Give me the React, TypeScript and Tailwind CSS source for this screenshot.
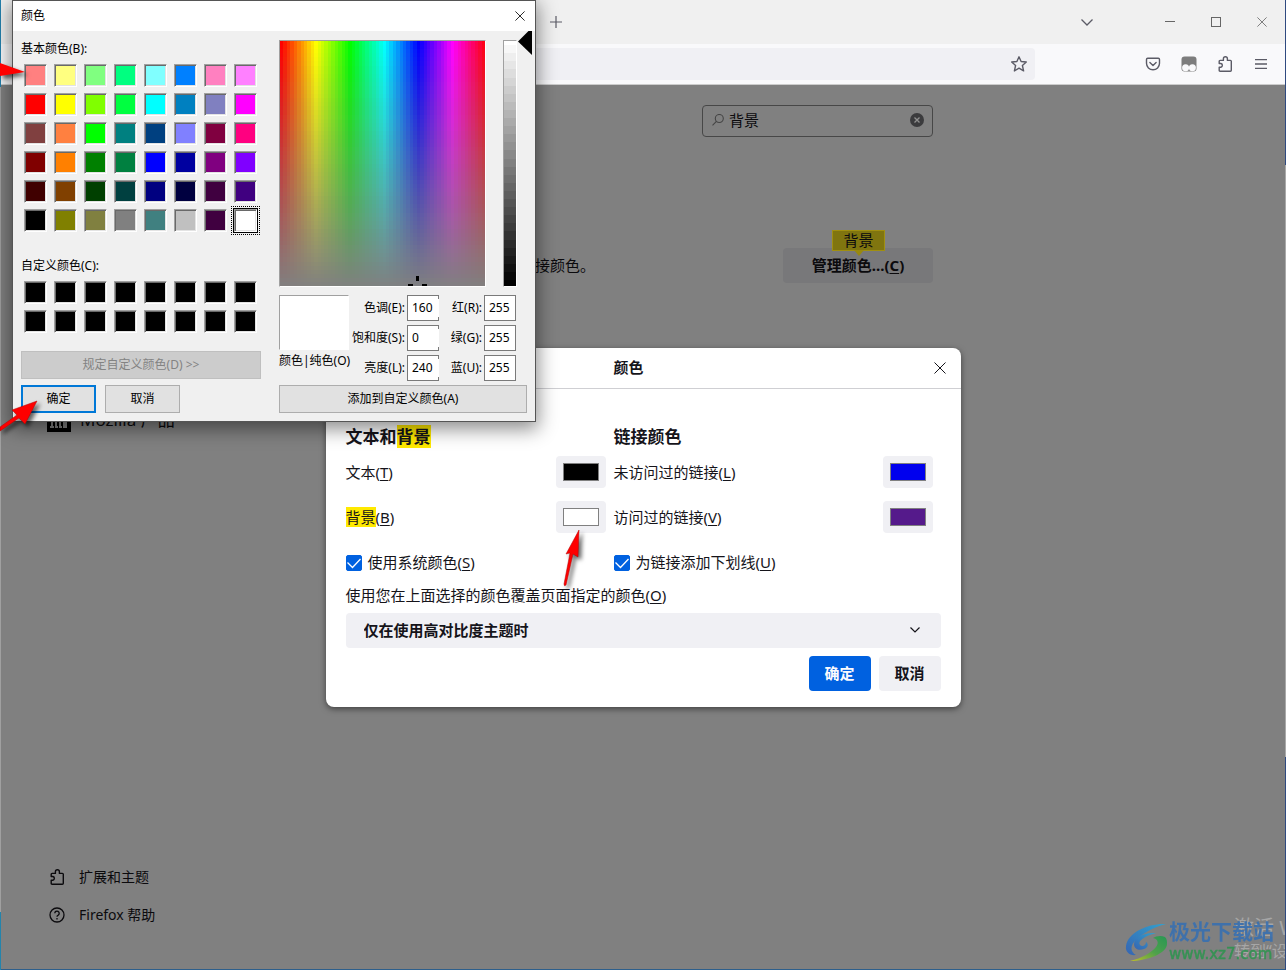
import type { ReactNode } from 'react';

const BASIC_COLORS = [
  '#ff8080', '#ffff80', '#80ff80', '#00ff80', '#80ffff', '#0080ff', '#ff80c0', '#ff80ff',
  '#ff0000', '#ffff00', '#80ff00', '#00ff40', '#00ffff', '#0080c0', '#8080c0', '#ff00ff',
  '#804040', '#ff8040', '#00ff00', '#008080', '#004080', '#8080ff', '#800040', '#ff0080',
  '#800000', '#ff8000', '#008000', '#008040', '#0000ff', '#0000a0', '#800080', '#8000ff',
  '#400000', '#804000', '#004000', '#004040', '#000080', '#000040', '#400040', '#400080',
  '#000000', '#808000', '#808040', '#808080', '#408080', '#c0c0c0', '#400040', '#ffffff',
];

const CUSTOM_COLORS = Array.from({ length: 16 }, () => '#000000');

const FIELDS = [
  { id: 'hue', label: '色调(E):', value: '160' },
  { id: 'red', label: '红(R):', value: '255' },
  { id: 'sat', label: '饱和度(S):', value: '0' },
  { id: 'green', label: '绿(G):', value: '255' },
  { id: 'lum', label: '亮度(L):', value: '240' },
  { id: 'blue', label: '蓝(U):', value: '255' },
];

function CloseIcon({ className }: { className: string }) {
  return (
    <svg viewBox="0 0 12 12" className={className} fill="none" stroke="currentColor">
      <path d="M.5.5l11 11M11.5.5l-11 11" />
    </svg>
  );
}

function PuzzleIcon() {
  return (
    <svg viewBox="0 0 16 16" className="size-4" fill="none" stroke="currentColor" strokeWidth="1.4" strokeLinejoin="round">
      <path d="M2.2 7.5V5.3q0-.9.9-.9h3.3V2.7a2 2 0 0 1 4 0v1.7h3q.9 0 .9.9v9q0 .9-.9.9H3.1q-.9 0-.9-.9v-3.1h1.7a1.9 1.9 0 0 0 0-3.7z" />
    </svg>
  );
}

function SwatchGrid({ name, colors, selected }: { name: string; colors: string[]; selected?: number }) {
  return (
    <div className="ml-[3px] mt-[7px] grid w-[233px] grid-cols-8 gap-x-[7px] gap-y-1.5" role="group" aria-label={name}>
      {colors.map((color, i) => (
        <button
          key={i}
          aria-label={color}
          style={{ backgroundColor: color }}
          className={`size-[23px] border border-b-white border-l-[#a0a0a0] border-r-white border-t-[#a0a0a0] shadow-[inset_1px_1px_#696969,inset_-1px_-1px_#e3e3e3] ${
            i === selected ? 'outline-1 outline-offset-2 outline-dotted outline-black ring-1 ring-black' : ''
          }`}
        />
      ))}
    </div>
  );
}

// Hue runs left to right, saturation drops towards the bottom
function HueField() {
  const col = (i: number) => Math.round((i * 205) / 60);
  const row = (i: number) => Math.round((i * 245) / 60);
  return (
    <svg viewBox="0 0 205 245" className="h-[245px] w-[205px]" shapeRendering="crispEdges">
      {Array.from({ length: 60 }, (_, i) => (
        <rect key={i} x={col(i)} y="0" width={col(i + 1) - col(i)} height="245" fill={`hsl(${i * 6} 100% 50%)`} />
      ))}
      {Array.from({ length: 60 }, (_, i) => (
        <rect key={i} x="0" y={row(i)} width="205" height={row(i + 1) - row(i)} fill="#808080" fillOpacity={i / 60} />
      ))}
      <path d="M136 235h3v5h-3zM128 243h5v2h-5zM142 243h5v2h-5z" fill="#000" />
    </svg>
  );
}

function LuminosityBar() {
  return (
    <svg viewBox="0 0 12 245" className="h-[245px] w-3" shapeRendering="crispEdges">
      {Array.from({ length: 31 }, (_, i) => {
        const level = Math.round(255 - (i * 255) / 30);
        return <rect key={i} x="0" y={i === 0 ? 0 : Math.round(i * 8.1) - 4} width="12" height="9" fill={`rgb(${level},${level},${level})`} />;
      })}
    </svg>
  );
}

function ColorPickerDialog() {
  return (
    <section className="absolute left-3 top-0 z-20 w-[524px] border border-[#555] bg-[#f0f0f0] text-xs text-black shadow-[0_5px_18px_2px_rgba(0,0,0,0.45)]">
      <header className="flex h-[30px] items-center justify-between bg-white pl-2">
        <h2>颜色</h2>
        <button aria-label="关闭" className="flex h-full w-[30px] items-center justify-center">
          <CloseIcon className="size-2.5" />
        </button>
      </header>

      <div className="flex gap-[18px] px-2 pb-2">
        <div className="w-[240px] shrink-0 pt-2">
          <p className="h-[18px] leading-[20px]">基本颜色(B):</p>
          <SwatchGrid name="基本颜色" colors={BASIC_COLORS} selected={47} />
          <p className="mt-6 h-[18px] leading-[20px]">自定义颜色(C):</p>
          <SwatchGrid name="自定义颜色" colors={CUSTOM_COLORS} />
          <button disabled className="mt-[18px] h-7 w-full border border-[#bfbfbf] bg-[#ccc] text-[#838383]">
            规定自定义颜色(D) &gt;&gt;
          </button>
          <div className="mt-1.5 flex gap-[9px]">
            <button className="h-7 w-[75px] border-2 border-[#0078d7] bg-[#e1e1e1]">确定</button>
            <button className="h-7 w-[75px] border border-[#adadad] bg-[#e1e1e1]">取消</button>
          </div>
        </div>

        <div className="min-w-0 flex-1">
          <div className="flex">
            <div className="mt-[9px] shrink-0 border border-b-white border-l-[#a0a0a0] border-r-white border-t-[#a0a0a0]">
              <HueField />
            </div>
            <div className="ml-[17px] mt-[9px] shrink-0 border border-b-white border-l-[#a0a0a0] border-r-white border-t-[#a0a0a0]">
              <LuminosityBar />
            </div>
            <svg viewBox="0 0 14 24" className="ml-px h-6 w-3.5 shrink-0">
              <path d="M0 10.500L10.500 0H14v24z" />
            </svg>
          </div>

          <div className="mt-2 flex gap-0.5">
            <div className="w-[70px] shrink-0">
              <div className="h-[55px] border border-b-white border-l-[#a0a0a0] border-r-white border-t-[#a0a0a0] bg-white" />
              <p className="whitespace-nowrap leading-[22px]">颜色|纯色(O)</p>
            </div>
            <div className="grid grid-cols-[54px_32px_41px_32px] gap-x-0.5 gap-y-1">
              {FIELDS.map((field, i) => (
                <div key={field.id} className="contents">
                  <label htmlFor={field.id} className="whitespace-nowrap text-right leading-[26px]">
                    {field.label}
                  </label>
                  <span
                    className={`relative block h-[26px] ${
                      i % 2 === 0 ? 'after:absolute after:inset-y-1 after:right-0 after:w-px after:bg-white' : ''
                    }`}
                  >
                    <input
                      id={field.id}
                      defaultValue={field.value}
                      className="block h-full w-full border border-[#7a7a7a] bg-white pb-0.5 pl-1 outline-none"
                    />
                  </span>
                </div>
              ))}
            </div>
          </div>

          <button className="mt-1 h-7 w-full border border-[#adadad] bg-[#e1e1e1]">添加到自定义颜色(A)</button>
        </div>
      </div>
    </section>
  );
}

function ColorRow({ id, value, children }: { id: string; value: string; children: ReactNode }) {
  return (
    <div className="flex h-[45px] items-start justify-between">
      <label htmlFor={id} className="leading-8">
        {children}
      </label>
      <input
        id={id}
        type="color"
        defaultValue={value}
        className="h-8 w-[50px] rounded bg-[#f0f0f4] p-[7px] [&::-webkit-color-swatch]:rounded-none [&::-webkit-color-swatch]:border [&::-webkit-color-swatch]:border-[#808080] [&::-webkit-color-swatch-wrapper]:p-0"
      />
    </div>
  );
}

function CheckRow({ id, children }: { id: string; children: ReactNode }) {
  return (
    <div className="flex h-[34px] items-center gap-1.5">
      <span className="relative size-4">
        <input id={id} type="checkbox" defaultChecked className="peer block size-4 appearance-none rounded-xs border border-[#8f8f9d] checked:border-[#0061e0] checked:bg-[#0061e0]" />
        <svg viewBox="0 0 16 16" className="pointer-events-none absolute inset-0 hidden size-4 peer-checked:block" fill="none" stroke="#fff" strokeWidth="1.3">
          <path d="M1.500 7.500l5 5L14.500 4" />
        </svg>
      </span>
      <label htmlFor={id}>{children}</label>
    </div>
  );
}

function ColorsModal() {
  return (
    <section className="w-[635px] rounded-lg bg-white text-[15px] text-[#15141a] shadow-[0_2px_6px_rgba(0,0,0,0.5)]">
      <header className="flex h-[41px] items-center border-b border-[#cfcfd3]">
        <h2 className="flex-1 text-center font-bold">颜色</h2>
        <button aria-label="关闭" className="flex h-full w-[29px] items-center pl-0.5">
          <CloseIcon className="size-3" />
        </button>
      </header>

      <div className="px-5 pb-4 pt-[37px]">
        <div className="grid grid-cols-[260px_1fr] gap-x-2 pr-2">
          <div>
            <h3 className="mb-2 h-[22px] text-[17px] font-bold leading-[22px]">
              文本和<mark className="bg-[#ffe900] text-inherit">背景</mark>
            </h3>
            <ColorRow id="text-color" value="#000000">
              文本(<u className="underline-offset-2">T</u>)
            </ColorRow>
            <ColorRow id="background-color" value="#ffffff">
              <mark className="bg-[#ffe900] text-inherit">背景</mark>(<u className="underline-offset-2">B</u>)
            </ColorRow>
            <CheckRow id="system-colors">
              使用系统颜色(<u className="underline-offset-2">S</u>)
            </CheckRow>
          </div>
          <div>
            <h3 className="mb-2 h-[22px] text-[17px] font-bold leading-[22px]">链接颜色</h3>
            <ColorRow id="link-color" value="#0000ee">
              未访问过的链接(<u className="underline-offset-2">L</u>)
            </ColorRow>
            <ColorRow id="visited-color" value="#551a8b">
              访问过的链接(<u className="underline-offset-2">V</u>)
            </ColorRow>
            <CheckRow id="underline-links">
              为链接添加下划线(<u className="underline-offset-2">U</u>)
            </CheckRow>
          </div>
        </div>

        <label htmlFor="override" className="block leading-[30px]">
          使用您在上面选择的颜色覆盖页面指定的颜色(<u className="underline-offset-2">O</u>)
        </label>
        <div className="relative mt-[3px]">
          <select id="override" className="block h-[35px] w-full appearance-none rounded bg-[#f0f0f4] pl-[18px] font-bold outline-none">
            <option>仅在使用高对比度主题时</option>
          </select>
          <svg viewBox="0 0 10 6" className="pointer-events-none absolute right-[21px] top-3.5 h-1.5 w-2.5" fill="none" stroke="currentColor" strokeWidth="1.2">
            <path d="M.5.5L5 5 9.500.5" />
          </svg>
        </div>

        <div className="mt-2 flex justify-end gap-2 font-bold">
          <button className="h-[35px] w-[62px] rounded bg-[#0061e0] text-[#fbfbfe]">确定</button>
          <button className="h-[35px] w-[62px] rounded bg-[#f0f0f4]">取消</button>
        </div>
      </div>
    </section>
  );
}

function BrowserChrome() {
  return (
    <>
      <div className="flex h-11 items-center justify-between bg-[#f0f0f0] pl-[543px] text-[#5b5b66]">
        <button aria-label="新建标签页" className="flex size-6 items-center justify-center">
          <svg viewBox="0 0 12 12" className="size-3" fill="none" stroke="currentColor" strokeWidth="1.2">
            <path d="M6 0v12M0 6h12" />
          </svg>
        </button>
        <div className="flex items-center text-[#666]">
          <button aria-label="列出所有标签页" className="mr-[37px] flex w-[46px] justify-center">
            <svg viewBox="0 0 12 7" className="h-[7px] w-3" fill="none" stroke="#5b5b66" strokeWidth="1.300">
              <path d="M.5.5L6 6 11.500.5" />
            </svg>
          </button>
          <button aria-label="最小化" className="flex w-[46px] justify-center">
            <svg viewBox="0 0 10 10" className="size-2.5" shapeRendering="crispEdges" stroke="currentColor">
              <path d="M0 4.500h10" />
            </svg>
          </button>
          <button aria-label="最大化" className="flex w-[46px] justify-center">
            <svg viewBox="0 0 10 10" className="size-2.5" fill="none" shapeRendering="crispEdges" stroke="currentColor">
              <path d="M.5.5h9v9h-9z" />
            </svg>
          </button>
          <button aria-label="关闭窗口" className="flex w-[46px] justify-center">
            <CloseIcon className="size-2.5" />
          </button>
        </div>
      </div>

      <div className="flex h-[41px] items-center border-b border-[#ccc] bg-[#f9f9fb] pl-[180px] pr-1.5 text-[#5b5b66]">
        <div className="mr-[100px] flex h-8 flex-1 items-center justify-end rounded bg-[#f0f0f4] pr-2">
          <button aria-label="为此页添加书签">
            <svg viewBox="0 0 16 16" className="size-4" fill="none" stroke="currentColor" strokeWidth="1.4" strokeLinejoin="round">
              <path d="M8 .8l2.100 4.700 5.200.5-3.900 3.500 1.200 5.400L8 12.200l-4.600 2.700 1.200-5.400L.7 6l5.200-.5z" />
            </svg>
          </button>
        </div>
        <button aria-label="保存到 Pocket" className="flex w-9 justify-center">
          <svg viewBox="0 0 16 16" className="size-4" fill="none" stroke="currentColor" strokeWidth="1.4" strokeLinecap="round" strokeLinejoin="round">
            <path d="M2.700 2.200h10.600q1.200 0 1.200 1.200v3.900a6.500 6.500 0 0 1-13 0V3.400q0-1.200 1.200-1.200zM4.900 6.400L8 9.400l3.100-3" />
          </svg>
        </button>
        <button aria-label="Tampermonkey" className="flex w-9 justify-center">
          <svg viewBox="0 0 16 16" className="size-4">
            <rect x=".5" y=".5" width="15" height="15" rx="3" fill="#7d7d7d" />
            <circle cx="4.600" cy="11.800" r="3.500" fill="#f9f9fb" />
            <circle cx="11.400" cy="11.800" r="3.500" fill="#f9f9fb" />
          </svg>
        </button>
        <button aria-label="扩展" className="flex w-9 justify-center">
          <PuzzleIcon />
        </button>
        <button aria-label="菜单" className="flex w-9 justify-center">
          <svg viewBox="0 0 12 10" className="h-2.5 w-3" stroke="currentColor" strokeWidth="1.300">
            <path d="M0 .7h12M0 5h12M0 9.300h12" />
          </svg>
        </button>
      </div>
    </>
  );
}

function Sidebar() {
  return (
    <nav className="flex w-[268px] flex-col pb-[35px] pl-[46px] pt-[323px] text-sm">
      <a href="#mozilla" className="flex h-6 items-center gap-[9px] text-[17px]">
        <svg viewBox="0 0 24 24" className="size-6">
          <path d="M0 0h24v24H0z" />
          <path d="M3 20v-2h1v-4H3v-2h3v1q2-2 4 0 2-2 4 0v5h1v2h-3v-6h-2v4h1v2H8v-6H6v4h1v2zM16 20v-8h4v8z" fill="#808080" />
        </svg>
        Mozilla 产品
      </a>
      <a href="#addons" className="mt-auto flex h-[38px] items-center gap-3.5 pl-0.5">
        <PuzzleIcon />
        扩展和主题
      </a>
      <a href="#help" className="flex h-[38px] items-center gap-3.5 pl-0.5">
        <svg viewBox="0 0 16 16" className="size-4" fill="none" stroke="currentColor" strokeWidth="1.300">
          <circle cx="8" cy="8" r="7" />
          <path d="M5.800 6.300a2.200 2.200 0 1 1 3.400 1.800Q8 8.700 8 9.800M8 11v1.400" />
        </svg>
        Firefox 帮助
      </a>
    </nav>
  );
}

function Watermark() {
  return (
    <div className="absolute bottom-0 right-0 h-[60px] w-[160px] overflow-hidden">
      <div className="absolute left-[109px] top-1.5 whitespace-nowrap text-[#a6a6a6]">
        <p className="text-xl leading-[26px]">激活 W</p>
        <p className="text-base leading-5">转到“设</p>
      </div>
      <div className="flex items-center gap-0.5 pt-2.5 opacity-90">
        <svg viewBox="0 0 42 40" className="h-10 w-[42px] shrink-0">
          <defs>
            <linearGradient id="swirl-blue" x1="0" y1="1" x2="1" y2="0">
              <stop offset="0" stopColor="#2e62b8" />
              <stop offset="1" stopColor="#2aa5d8" />
            </linearGradient>
            <linearGradient id="swirl-green" x1="0" y1="1" x2="1" y2="0">
              <stop offset="0" stopColor="#c8c81e" />
              <stop offset=".5" stopColor="#4aa546" />
              <stop offset="1" stopColor="#1f9a50" />
            </linearGradient>
          </defs>
          <path d="M41 2C24 1 3 10 1 24c-1 6 4 10 10 9-6-3-6-10 0-15C18 11 29 5 41 2z" fill="url(#swirl-blue)" />
          <path d="M31 11C18 10 9 16 9 22c0 5 5 7 10 5 4-1 5-5 2-7 0 4-4 5-6 3-3-4 5-9 16-12z" fill="url(#swirl-blue)" />
          <path d="M40 15c-4-2-9-1-12 1 5 1 6 5 3 9-5 6-14 11-26 14 18 0 37-8 37-17 0-3 0-5-2-7z" fill="url(#swirl-green)" />
        </svg>
        <div className="whitespace-nowrap">
          <p className="text-[21px] font-bold leading-6 text-[#3970b0]">极光下载站</p>
          <p className="font-['DejaVu_Sans',sans-serif] text-[15px] leading-[22px] text-[#2f9450] [-webkit-text-stroke:0.5px_#2f9450]">www.xz7.com</p>
        </div>
      </div>
    </div>
  );
}

function PreferencesPage() {
  return (
    <main className="relative flex flex-1 bg-[#808080] text-[#0b0a0d]">
      <Sidebar />
      <div className="w-[664px] pt-5">
        <div className="relative ml-auto w-[231px]">
          <svg viewBox="0 0 12 12" className="absolute left-2.5 top-[9px] size-3" fill="none" stroke="#444" strokeWidth="1.100">
            <circle cx="7.300" cy="4.500" r="4" />
            <path d="M4.400 7.400L.5 11.300" />
          </svg>
          <input
            aria-label="在设置中查找"
            defaultValue="背景"
            className="block h-8 w-full rounded border border-[#474747] bg-transparent pb-[3px] pl-[26px] text-[15px] outline-none"
          />
          <button aria-label="清除" className="absolute right-[9px] top-2">
            <svg viewBox="0 0 14 14" className="size-3.5">
              <circle cx="7" cy="7" r="7" fill="#3b3b3d" />
              <path d="M4.500 4.500l5 5M9.500 4.500l-5 5" stroke="#909090" strokeWidth="1.300" />
            </svg>
          </button>
        </div>

        <div className="mt-[111px] flex items-center justify-between text-[15px]">
          <p className="w-[326px] text-right">链接颜色。</p>
          <div className="relative">
            <button className="h-[35px] w-[150px] rounded bg-[#78787a] font-bold">
              管理颜色...(<u className="underline-offset-2">C</u>)
            </button>
            <span className="absolute -top-[18px] left-[49px] h-[21px] w-[53px] border border-[#a08f10] bg-[#80750f] text-center leading-[19px]">
              背景
              <svg viewBox="0 0 10 6" className="absolute left-[21px] top-[19px] h-1.5 w-2.5">
                <path d="M0 0h10L5 6z" fill="#988810" />
              </svg>
            </span>
          </div>
        </div>
      </div>

      <div className="absolute inset-0 flex items-center justify-center">
        <ColorsModal />
      </div>
      <Watermark />
    </main>
  );
}

// Red pointers drawn on top of both dialogs
function Arrows() {
  return (
    <div className="pointer-events-none absolute inset-0 z-30 overflow-hidden">
      <svg viewBox="0 0 600 600" className="h-[600px] w-[600px] drop-shadow-[3px_3px_2px_rgba(0,0,0,0.6)]" fill="#fe0000">
        <path d="M0 63l25 9-25 4z" />
        <path d="M37 401l-12 23-6-6-19 13v-4l17-12-5-5z" stroke="#b00000" strokeWidth=".5" />
        <path d="M579 530l-1 27-5-3-7 31q-2 2-2-1l6-31-4 1z" stroke="#b00000" strokeWidth=".5" />
      </svg>
    </div>
  );
}

export default function App() {
  return (
    <div className="relative flex min-h-screen overflow-hidden font-['Noto_Sans','Noto_Sans_CJK_SC',sans-serif]">
      <div className="w-px bg-[linear-gradient(#2480ad_9%,#a0a0a0_9%,#a0a0a0_94%,#2384ac_94%)]" />
      <div className="flex flex-1 flex-col border-b border-[#2d5f8c]">
        <BrowserChrome />
        <PreferencesPage />
      </div>
      <div className="w-px bg-[linear-gradient(#2f4a80_17%,#aaa_17%,#aaa_78%,#2f4a80_78%)]" />
      <ColorPickerDialog />
      <Arrows />
    </div>
  );
}
